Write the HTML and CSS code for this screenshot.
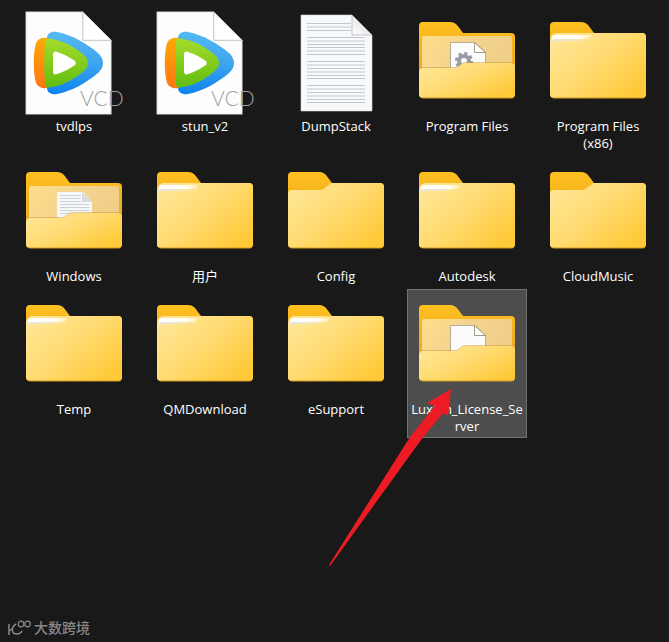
FILE: index.html
```html
<!DOCTYPE html>
<html lang="zh-CN">
<head>
    <meta charset="UTF-8">
    <title>文件</title>
    <link rel="stylesheet" href="styles.css">
</head>
<body>
<!-- 图标定义 -->
<svg class="defs" width="0" height="0" aria-hidden="true">
    <defs>
        <linearGradient id="front" x1="0" y1="0" x2="1" y2="0.8">
            <stop offset="0" stop-color="#ffe89c"/>
            <stop offset="0.5" stop-color="#ffdb72"/>
            <stop offset="1" stop-color="#ffc937"/>
        </linearGradient>
        <linearGradient id="back" x1="0" y1="0" x2="0" y2="1">
            <stop offset="0" stop-color="#ffc021"/>
            <stop offset="0.3" stop-color="#f6b31d"/>
            <stop offset="1" stop-color="#dfa02a"/>
        </linearGradient>
        <linearGradient id="inner" x1="0" y1="0" x2="1" y2="0.3">
            <stop offset="0" stop-color="#ffdf8a"/>
            <stop offset="0.5" stop-color="#f3d48f"/>
            <stop offset="1" stop-color="#f0d088"/>
        </linearGradient>
        <linearGradient id="strip" x1="0" y1="0" x2="1" y2="0">
            <stop offset="0" stop-color="#fff"/>
            <stop offset="0.7" stop-color="#fffdf2"/>
            <stop offset="1" stop-color="#ffe9a0"/>
        </linearGradient>
        <linearGradient id="stripEdge" x1="0" y1="0" x2="1" y2="0">
            <stop offset="0" stop-color="#e6e6de"/>
            <stop offset="0.5" stop-color="#ece6cc"/>
            <stop offset="1" stop-color="#ffe492"/>
        </linearGradient>
        <linearGradient id="fold" x1="0" y1="1" x2="1" y2="0">
            <stop offset="0" stop-color="#fff"/>
            <stop offset="1" stop-color="#d4d6da"/>
        </linearGradient>
        <linearGradient id="blue" x1="0" y1="0" x2="0" y2="1">
            <stop offset="0" stop-color="#55b9f3"/>
            <stop offset="0.5" stop-color="#3fa5ee"/>
            <stop offset="1" stop-color="#0c83f0"/>
        </linearGradient>
        <linearGradient id="green" x1="0" y1="0" x2="0" y2="1">
            <stop offset="0" stop-color="#a4dc2c"/>
            <stop offset="1" stop-color="#62bd10"/>
        </linearGradient>
        <linearGradient id="orange" x1="0" y1="0" x2="0" y2="1">
            <stop offset="0" stop-color="#ffa800"/>
            <stop offset="1" stop-color="#ff7616"/>
        </linearGradient>
    </defs>

    <symbol id="folder-back" viewBox="0 0 118 111">
        <path fill="url(#back)" d="M11 19a4 4 0 0 1 4-4h27c3 0 5 1 7 3l6 8h48a4 4 0 0 1 4 4v57a4 4 0 0 1-4 4H15a4 4 0 0 1-4-4z"/>
    </symbol>
    <!-- 空文件夹 -->
    <symbol id="folder" viewBox="0 0 118 111">
        <use href="#folder-back"/>
        <path fill="url(#front)" d="M11 37a4 4 0 0 1 4-4h27c3 0 5-1 7-3l3-2c1-1 2-2 4-2h47a4 4 0 0 1 4 4v57a4 4 0 0 1-4 4H15a4 4 0 0 1-4-4z"/>
        <path fill="none" stroke="#d99a1c" d="M13 90.500c1 .5 2 .5 3 .5h87c1 0 2 0 3-1"/>
    </symbol>
    <!-- 有文件的文件夹 -->
    <symbol id="folder-full" viewBox="0 0 118 111">
        <use href="#folder-back"/>
        <path fill="url(#front)" d="M11 33a7 7 0 0 1 7-7h85a4 4 0 0 1 4 4v57a4 4 0 0 1-4 4H15a4 4 0 0 1-4-4z"/>
        <path fill="url(#strip)" d="M13 34v-3a3 3 0 0 1 3-3h37l-3 4H17c-2 0-3 0-4 2z"/>
        <path fill="none" stroke="url(#stripEdge)" stroke-width="2" d="M13 35c0-2 2-2 4-2h24l9-.5"/>
        <path fill="none" stroke="#d99a1c" d="M13 90.500c1 .5 2 .5 3 .5h87c1 0 2 0 3-1"/>
    </symbol>
    <!-- 打开的文件夹 -->
    <symbol id="open-back" viewBox="0 0 118 111">
        <use href="#folder-back"/>
        <path fill="url(#inner)" d="M14 31a2 2 0 0 1 2-2h86a2 2 0 0 1 2 2v35H14z"/>
    </symbol>
    <symbol id="open-front" viewBox="0 0 118 111">
        <path fill="#c8963a" opacity="0.5" d="M11 64a4 4 0 0 1 4-4h31c2 0 3 0 4-1l4-3c1-1 2-1 4-1h45a4 4 0 0 1 4 4v10H11z"/>
        <path fill="url(#front)" d="M11 65a4 4 0 0 1 4-4h31c2 0 3 0 4-1l4-3c1-1 2-1 4-1h45a4 4 0 0 1 4 4v27a4 4 0 0 1-4 4H15a4 4 0 0 1-4-4z"/>
        <path fill="none" stroke="#d99a1c" d="M13 90.500c1 .5 2 .5 3 .5h87c1 0 2 0 3-1"/>
    </symbol>
    <symbol id="page" viewBox="0 0 118 111">
        <path fill="#fcfcfc" stroke="#8b8572" stroke-width="0.600" d="M42.500 66V35.500h24l11 10V66z"/>
        <path fill="#fff" stroke="#8b8572" stroke-width="0.800" d="M66.500 35.500v10h11z"/>
    </symbol>
    <!-- 视频文件 -->
    <symbol id="vcd" viewBox="0 0 118 111">
        <path fill="#fdfdfd" stroke="#aaa" stroke-width="0.600" d="M10.800 4.800h57l28.500 28.500v74H10.800z"/>
        <path fill="#fff" stroke="#b4b4b4" stroke-width="0.800" d="M67.800 4.800v28.500h28.500z"/>
        <path fill="url(#blue)" d="M32 31c0-5 5-7 10-6 15 3 29 11 41 21 3 3 5 6 5 10s-2 7-5 10C71 76 57 84 42 87c-5 1-10-1-10-6z"/>
        <path fill="url(#orange)" d="M21 36c2-4 6-6 11-5l2 1v48l-2 1c-5 1-9-1-11-5-3-10-3-30 0-40z"/>
        <path fill="url(#green)" d="M30 34c0-2 3-3 7-2 13 2 24 9 33 17 2 2 3 5 3 7s-1 5-3 7c-9 8-20 15-33 17-4 1-7 0-7-2-1-14-1-30 0-44z"/>
        <path fill="#fff" d="M38 47c0-2 2-3 4-2 7 2 12 5 18 9 1 1 1 3 0 4-6 4-11 7-18 9-2 1-4 0-4-2z"/>
    </symbol>
    <!-- 文本文件 -->
    <symbol id="text" viewBox="0 0 118 111">
        <path fill="#f8f9fa" stroke="#d5d7da" stroke-width="0.600" d="M24 8h51l20 20v76H24z"/>
        <path stroke="#c3c8cc" fill="none" d="M30 16.500h44M30 20h44M30 23.500h44M30 30.500h58M30 34h58M30 37.500h58M30 40.500h58M30 44h58M30 47.500h58M30 54.500h58M30 58h58M30 61.500h58M30 65h58M30 68.500h58M30 71.500h58M30 78.500h58M30 82h58M30 85.500h58M30 89h58M30 92.500h58M30 95.500h58"/>
        <path fill="url(#fold)" stroke="#9fa3a7" stroke-width="0.600" d="M75 8v20h20z"/>
    </symbol>
</svg>

<main>
    <ul class="files">
        <li class="file">
            <svg class="icon" viewBox="0 0 118 111"><use href="#vcd"/><text class="ext" x="65" y="99">VCD</text></svg>
            <span class="name">tvdlps</span>
        </li>
        <li class="file">
            <svg class="icon" viewBox="0 0 118 111"><use href="#vcd"/><text class="ext" x="65" y="99">VCD</text></svg>
            <span class="name">stun_v2</span>
        </li>
        <li class="file">
            <svg class="icon" viewBox="0 0 118 111"><use href="#text"/></svg>
            <span class="name">DumpStack</span>
        </li>
        <li class="file">
            <svg class="icon" viewBox="0 0 118 111">
                <use href="#open-back"/>
                <use href="#page"/>
                <circle cx="56" cy="54" r="5" fill="none" stroke="#979da8" stroke-width="4"/>
                <circle cx="56" cy="54" r="7" fill="none" stroke="#979da8" stroke-width="4" stroke-dasharray="3 2.498"/>
                <use href="#open-front"/>
            </svg>
            <span class="name">Program Files</span>
        </li>
        <li class="file">
            <svg class="icon" viewBox="0 0 118 111"><use href="#folder-full"/></svg>
            <span class="name">Program Files (x86)</span>
        </li>
        <li class="file">
            <svg class="icon" viewBox="0 0 118 111">
                <use href="#open-back"/>
                <path fill="#f6f7f9" d="M42 66V35h26l9 10v21z"/>
                <path stroke="#ccd2da" fill="none" d="M45 38.500h21M45 41.500h21M45 44.500h21M45 47.500h29M45 50.500h29M45 53.500h29M45 56.500h29"/>
                <path fill="#d3dce0" d="M67 35v10h10z"/>
                <use href="#open-front"/>
            </svg>
            <span class="name">Windows</span>
        </li>
        <li class="file">
            <svg class="icon" viewBox="0 0 118 111"><use href="#folder-full"/></svg>
            <span class="name">用户</span>
        </li>
        <li class="file">
            <svg class="icon" viewBox="0 0 118 111"><use href="#folder"/></svg>
            <span class="name">Config</span>
        </li>
        <li class="file">
            <svg class="icon" viewBox="0 0 118 111"><use href="#folder-full"/></svg>
            <span class="name">Autodesk</span>
        </li>
        <li class="file">
            <svg class="icon" viewBox="0 0 118 111"><use href="#folder"/></svg>
            <span class="name">CloudMusic</span>
        </li>
        <li class="file">
            <svg class="icon" viewBox="0 0 118 111"><use href="#folder-full"/></svg>
            <span class="name">Temp</span>
        </li>
        <li class="file">
            <svg class="icon" viewBox="0 0 118 111"><use href="#folder-full"/></svg>
            <span class="name">QMDownload</span>
        </li>
        <li class="file">
            <svg class="icon" viewBox="0 0 118 111"><use href="#folder-full"/></svg>
            <span class="name">eSupport</span>
        </li>
        <li class="file active">
            <svg class="icon" viewBox="0 0 118 111">
                <use href="#open-back"/>
                <use href="#page"/>
                <use href="#open-front"/>
            </svg>
            <span class="name">Luxion_License_Server</span>
            <svg class="arrow" viewBox="0 0 124 178">
                <path fill="#ed1c24" d="M122 1L98 15l8 3-25 31L0 177l1 1 91-126 22-27 5 3z"/>
            </svg>
        </li>
    </ul>
</main>

<footer class="mark">
    <svg class="logo" viewBox="0 0 24 16">
        <path fill="none" stroke="#8a8a8a" stroke-width="1.500" d="M1 4v11M8 4C3 7 3 14 9 14c2 0 4-1 5-3M4 9L1 11"/>
        <circle cx="13" cy="4" r="2.800" fill="none" stroke="#8a8a8a" stroke-width="1.200"/>
        <circle cx="19.500" cy="4" r="2.800" fill="none" stroke="#8a8a8a" stroke-width="1.200"/>
    </svg>
    <span>大数跨境</span>
</footer>
</body>
</html>
```
FILE: styles.css
```css
*{
    margin: 0;
    padding: 0;
    box-sizing: border-box;
    list-style: none;
}
body{
    position: relative;
    min-height: 100vh;
    background-color: #191919;
    color: #fff;
    font: 13px/17px "Open Sans", "Noto Sans CJK SC", sans-serif;
}
.defs{
    position: absolute;
}
.files{
    display: grid;
    grid-template-columns: repeat(auto-fill, 120px);
    align-items: start;
    gap: 1px 11px;
    padding: 6px 0 6px 14px;
}
.file{
    position: relative;
    padding-bottom: 2px;
    border: 1px solid transparent;
    text-align: center;
}
.file.active{
    background-color: #4d4d4d;
    border-color: #727272;
}
.icon{
    display: block;
    width: 100%;
}
.ext{
    font-family: Lato, sans-serif;
    font-size: 21px;
    font-weight: 300;
    fill: #a0a0a0;
}
.name{
    display: block;
    padding: 0 3px;
    overflow-wrap: anywhere;
}
/* 指向选中文件夹的红色箭头 */
.arrow{
    position: absolute;
    left: -79px;
    top: 98px;
    width: 124px;
    height: 178px;
    z-index: 1;
}
.mark{
    position: absolute;
    left: 8px;
    bottom: 4px;
    display: flex;
    align-items: center;
    gap: 2px;
    color: #8a8a8a;
    font-size: 14px;
    font-weight: 500;
    line-height: 20px;
}
.logo{
    width: 24px;
    height: 16px;
}
```
